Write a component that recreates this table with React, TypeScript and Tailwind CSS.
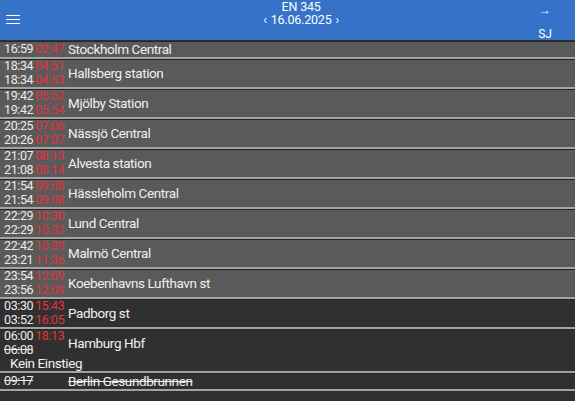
type Stop = {
  arr?: [string, string | null];
  dep?: [string, string | null];
  name: string;
  dark?: boolean;
  note?: string;
  depCancelled?: boolean;
  cancelled?: boolean;
};

const stops: Stop[] = [
  { dep: ["16:59", "02:47"], name: "Stockholm Central" },
  { arr: ["18:34", "04:51"], dep: ["18:34", "04:53"], name: "Hallsberg station" },
  { arr: ["19:42", "05:52"], dep: ["19:42", "05:54"], name: "Mjölby Station" },
  { arr: ["20:25", "07:06"], dep: ["20:26", "07:07"], name: "Nässjö Central" },
  { arr: ["21:07", "08:13"], dep: ["21:08", "08:14"], name: "Alvesta station" },
  { arr: ["21:54", "09:08"], dep: ["21:54", "09:08"], name: "Hässleholm Central" },
  { arr: ["22:29", "10:30"], dep: ["22:29", "10:32"], name: "Lund Central" },
  { arr: ["22:42", "10:39"], dep: ["23:21", "11:36"], name: "Malmö Central" },
  { arr: ["23:54", "12:09"], dep: ["23:56", "12:09"], name: "Koebenhavns Lufthavn st" },
  { arr: ["03:30", "15:43"], dep: ["03:52", "16:05"], name: "Padborg st", dark: true },
  { arr: ["06:00", "18:13"], dep: ["06:08", null], name: "Hamburg Hbf", dark: true, depCancelled: true, note: "Kein Einstieg" },
  { arr: ["09:17", null], name: "Berlin Gesundbrunnen", dark: true, cancelled: true },
];

function TimeLine({ t, strike }: { t: [string, string | null]; strike?: boolean }) {
  return (
    <div className="h-[14px] leading-[14px] text-[12.5px] tracking-[-0.4px] whitespace-nowrap">
      <span className={strike ? "line-through text-[#e8e8e8]" : "text-[#ececec]"}>{t[0]}</span>
      {t[1] && <span className="ml-[2px] text-[#e0343f]">{t[1]}</span>}
    </div>
  );
}

function StopRow({ s }: { s: Stop }) {
  return (
    <div
      className={`border-b-2 border-b-[#a3a3a3] shadow-[inset_0_1px_0_#262626] ${
        s.dark ? "bg-[#303030]" : "bg-[#5a5a5a]"
      }`}
    >
      <div className="flex items-center">
        <div className="w-[68px] pl-[4px] shrink-0">
          {s.arr && <TimeLine t={s.arr} strike={s.cancelled} />}
          {s.dep && <TimeLine t={s.dep} strike={s.depCancelled} />}
        </div>
        <div
          className={`text-[13.5px] tracking-[-0.4px] leading-[16px] text-[#f0f0f0] whitespace-nowrap ${
            s.cancelled ? "line-through" : ""
          }`}
        >
          {s.name}
        </div>
      </div>
      {s.note && (
        <div className="pl-[10px] h-[14px] leading-[13px] text-[13.5px] tracking-[-0.4px] text-[#f0f0f0]">
          {s.note}
        </div>
      )}
    </div>
  );
}

export default function App() {
  return (
    <div
      className="w-[575px] h-[401px] overflow-hidden bg-[#303030]"
      style={{ fontFamily: "Roboto, 'Liberation Sans', sans-serif" }}
    >
      <header className="h-[40px] bg-[#3572c8] flex items-start justify-between pl-[6px] pr-[23px] text-white">
        <div className="flex flex-col gap-[2.5px] w-[14px] mt-[14.5px]">
          <span className="h-[1.5px] bg-white" />
          <span className="h-[1.5px] bg-white" />
          <span className="h-[1.5px] bg-white" />
        </div>
        <div className="flex flex-col items-center text-[12.5px] tracking-[-0.2px] leading-[13px] ml-[44px]">
          <div>EN 345</div>
          <div className="flex items-center gap-[4px]">
            <span>&lsaquo;</span>
            <span>16.06.2025</span>
            <span>&rsaquo;</span>
          </div>
        </div>
        <div className="flex flex-col items-center text-[12px] leading-[13px] pt-[4px]">
          <span className="text-[12px]">→</span>
          <span className="mt-[11px]">SJ</span>
        </div>
      </header>
      <div className="pt-[1px]">
        {stops.map((s) => (
          <StopRow key={s.name} s={s} />
        ))}
      </div>
    </div>
  );
}
